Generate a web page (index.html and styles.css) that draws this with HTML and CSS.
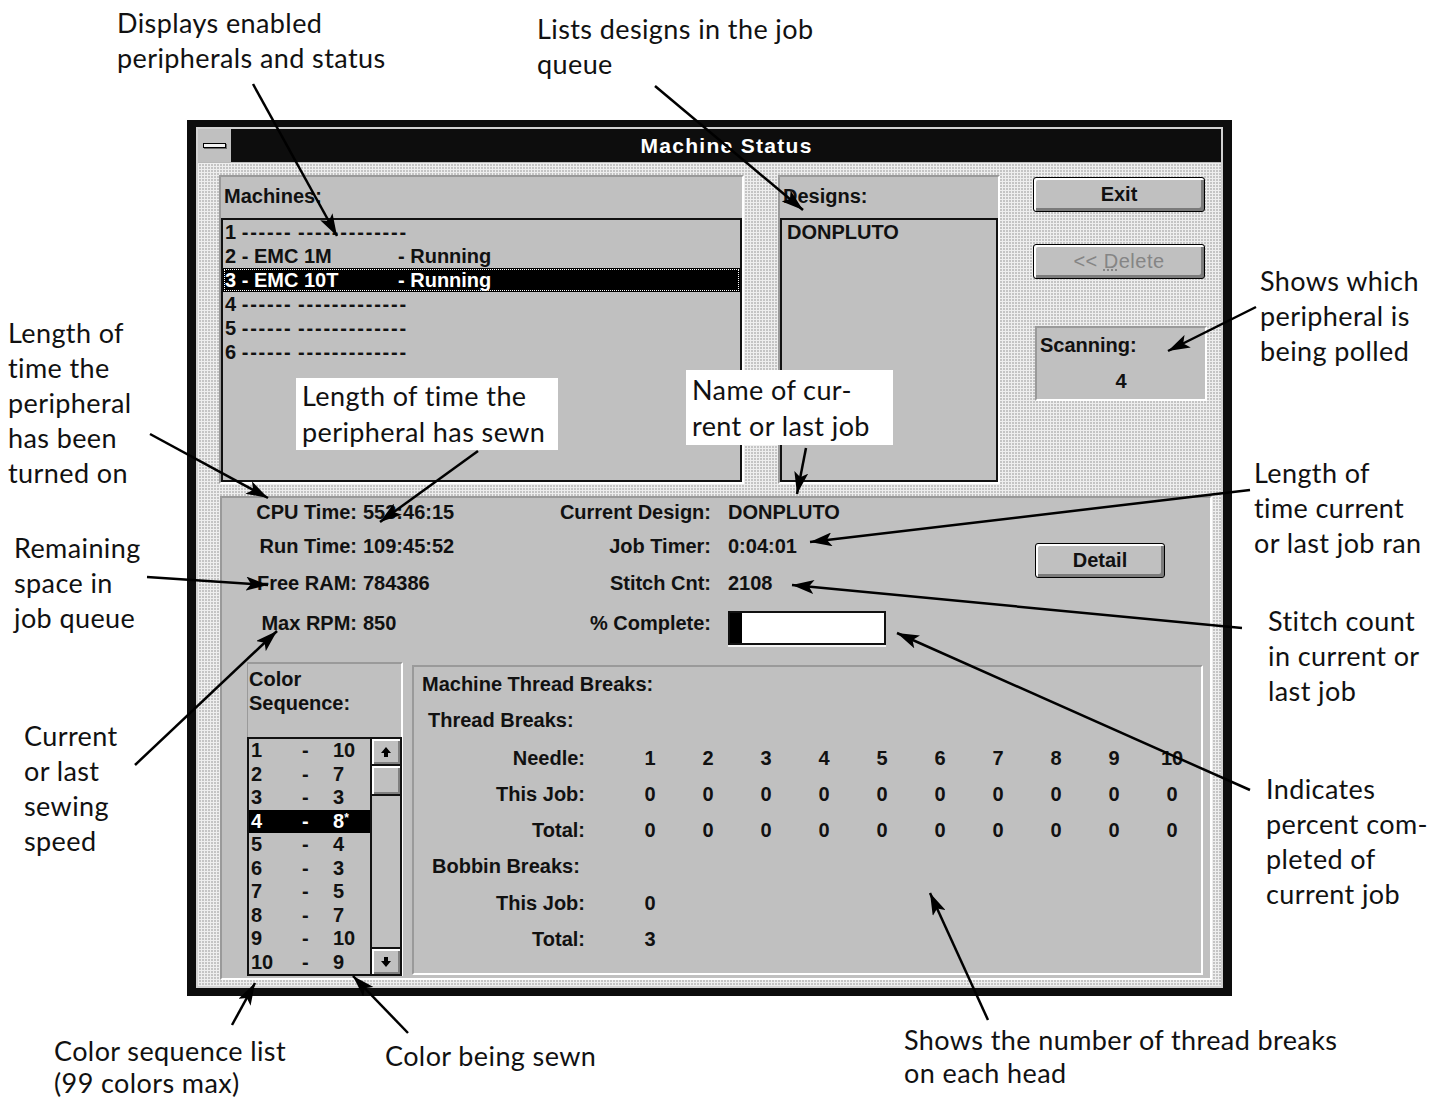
FILE: index.html
```html
<!DOCTYPE html>
<html lang="en">
<head>
  <meta charset="UTF-8" />
  <title>Machine Status</title>
  <link rel="stylesheet" href="styles.css">
</head>
<body>
<div class="page">

  <div class="window">
    <div class="frame">
      <div class="titlebar">
        <div class="sysmenu"><span class="sysbar"></span></div>
        <div class="title">Machine Status</div>
      </div>

      <div class="client">
        <div class="top">
          <div class="group machines">
            <div class="glabel">Machines:</div>
            <div class="listbox mlist">
              <div class="item">1 <span class="dash">------</span> <span class="dash">-------------</span></div>
              <div class="item"><span class="mname">2 - EMC 1M</span>- Running</div>
              <div class="item sel"><span class="mname">3 - EMC 10T</span>- Running</div>
              <div class="item">4 <span class="dash">------</span> <span class="dash">-------------</span></div>
              <div class="item">5 <span class="dash">------</span> <span class="dash">-------------</span></div>
              <div class="item">6 <span class="dash">------</span> <span class="dash">-------------</span></div>
            </div>
          </div>

          <div class="group designs">
            <div class="glabel">Designs:</div>
            <div class="listbox dlist">
              <div class="item">DONPLUTO</div>
            </div>
          </div>

          <div class="side">
            <div class="btn exit">Exit</div>
            <div class="btn delete">&lt;&lt; <u>D</u>elete</div>
            <div class="group scanning">
              <div class="slabel">Scanning:</div>
              <div class="svalue">4</div>
            </div>
          </div>
        </div>

        <div class="group bottom">
          <div class="info">
            <div class="lbl first">CPU Time:</div><div class="val v1">553:46:15</div>
            <div class="lbl">Current Design:</div><div class="val v2">DONPLUTO</div>

            <div class="lbl first">Run Time:</div><div class="val v1">109:45:52</div>
            <div class="lbl">Job Timer:</div><div class="val v2">0:04:01</div>

            <div class="lbl first">Free RAM:</div><div class="val v1">784386</div>
            <div class="lbl">Stitch Cnt:</div><div class="val v2">2108</div>

            <div class="lbl first">Max RPM:</div><div class="val v1">850</div>
            <div class="lbl">% Complete:</div>
            <div class="val v2"><div class="progress"><span class="fill"></span></div></div>

            <div class="btn detail">Detail</div>
          </div>

          <div class="lower">
            <div class="colorgroup">
              <div class="clabel">Color<br>Sequence:</div>
              <div class="listbox colorlist">
                <div class="crows">
                  <div class="crow"><span>1</span><span>-</span><span>10</span></div>
                  <div class="crow"><span>2</span><span>-</span><span>7</span></div>
                  <div class="crow"><span>3</span><span>-</span><span>3</span></div>
                  <div class="crow sel"><span>4</span><span>-</span><span>8<sup>*</sup></span></div>
                  <div class="crow"><span>5</span><span>-</span><span>4</span></div>
                  <div class="crow"><span>6</span><span>-</span><span>3</span></div>
                  <div class="crow"><span>7</span><span>-</span><span>5</span></div>
                  <div class="crow"><span>8</span><span>-</span><span>7</span></div>
                  <div class="crow"><span>9</span><span>-</span><span>10</span></div>
                  <div class="crow"><span>10</span><span>-</span><span>9</span></div>
                </div>
                <div class="scroll">
                  <div class="sbtn up">
                    <svg width="14" height="14" viewBox="0 0 14 14"><path d="M7 2 L12 8 L9 8 L9 12 L5 12 L5 8 L2 8 Z" fill="#000"/></svg>
                  </div>
                  <div class="thumb"></div>
                  <div class="track"></div>
                  <div class="sbtn down">
                    <svg width="14" height="14" viewBox="0 0 14 14"><path d="M7 12 L12 6 L9 6 L9 2 L5 2 L5 6 L2 6 Z" fill="#000"/></svg>
                  </div>
                </div>
              </div>
            </div>

            <div class="group threads">
              <div class="span t1">Machine Thread Breaks:</div>
              <div class="span t2">Thread Breaks:</div>

              <div class="tl">Needle:</div>
              <div class="n">1</div><div class="n">2</div><div class="n">3</div><div class="n">4</div><div class="n">5</div>
              <div class="n">6</div><div class="n">7</div><div class="n">8</div><div class="n">9</div><div class="n">10</div>

              <div class="tl">This Job:</div>
              <div class="n">0</div><div class="n">0</div><div class="n">0</div><div class="n">0</div><div class="n">0</div>
              <div class="n">0</div><div class="n">0</div><div class="n">0</div><div class="n">0</div><div class="n">0</div>

              <div class="tl">Total:</div>
              <div class="n">0</div><div class="n">0</div><div class="n">0</div><div class="n">0</div><div class="n">0</div>
              <div class="n">0</div><div class="n">0</div><div class="n">0</div><div class="n">0</div><div class="n">0</div>

              <div class="span t3">Bobbin Breaks:</div>

              <div class="tl">This Job:</div>
              <div class="n">0</div><div class="rest"></div>

              <div class="tl">Total:</div>
              <div class="n">3</div><div class="rest"></div>
            </div>
          </div>
        </div>
      </div>
    </div>
  </div>

  <!-- callouts -->
  <div class="note n1">Displays enabled<br>peripherals and status</div>
  <div class="note n2">Lists designs in the job<br>queue</div>
  <div class="note n3">Shows which<br>peripheral is<br>being polled</div>
  <div class="note n4">Length of<br>time the<br>peripheral<br>has been<br>turned on</div>
  <div class="note boxed n5">Length of time the<br>peripheral has sewn</div>
  <div class="note boxed n6">Name of cur-<br>rent or last job</div>
  <div class="note n7">Remaining<br>space in<br>job queue</div>
  <div class="note n8">Length of<br>time current<br>or last job ran</div>
  <div class="note n9">Stitch count<br>in current or<br>last job</div>
  <div class="note n10">Current<br>or last<br>sewing<br>speed</div>
  <div class="note n11">Indicates<br>percent com-<br>pleted of<br>current job</div>
  <div class="note n12">Color sequence list<br>(99 colors max)</div>
  <div class="note n13">Color being sewn</div>
  <div class="note n14">Shows the number of thread breaks<br>on each head</div>

  <svg class="arrows" width="1448" height="1100" viewBox="0 0 1448 1100">
    <defs>
      <marker id="head" markerUnits="userSpaceOnUse" markerWidth="24" markerHeight="14" refX="22" refY="7" orient="auto">
        <path d="M0 0 L22 7 L0 14 L5 7 Z" fill="#000"/>
      </marker>
    </defs>
    <g stroke="#000" stroke-width="2.5" marker-end="url(#head)">
      <line x1="253" y1="84" x2="337" y2="236"/>
      <line x1="655" y1="86" x2="803" y2="210"/>
      <line x1="1256" y1="307" x2="1168" y2="351"/>
      <line x1="150" y1="434" x2="268" y2="498"/>
      <line x1="478" y1="451" x2="380" y2="522"/>
      <line x1="806" y1="448" x2="797" y2="494"/>
      <line x1="147" y1="577" x2="268" y2="585"/>
      <line x1="1250" y1="490" x2="810" y2="542"/>
      <line x1="1242" y1="628" x2="792" y2="585"/>
      <line x1="135" y1="765" x2="277" y2="631"/>
      <line x1="1250" y1="790" x2="897" y2="633"/>
      <line x1="232" y1="1025" x2="255" y2="983"/>
      <line x1="408" y1="1033" x2="353" y2="976"/>
      <line x1="988" y1="1020" x2="930" y2="893"/>
    </g>
  </svg>
</div>
</body>
</html>
```

FILE: styles.css
```css
body {
  margin: 0;
  background: #fff;
  font-family: "Liberation Sans", Arial, sans-serif;
  color: #111;
}
.page { position: relative; width: 1448px; height: 1100px; overflow: hidden; }

/* dialog window */
.window {
  box-sizing: border-box;
  margin: 120px 0 0 187px;
  width: 1045px;
  height: 876px;
  border-style: solid;
  border-color: #0d0d0d;
  border-width: 7px 9px 8px 9px;
}
.frame { height: 100%; box-sizing: border-box; border: 2px solid #d2d2d2; display: flex; flex-direction: column; }
.titlebar { height: 33px; background: #0d0d0d; display: flex; border-bottom: 1px solid #b8b8b8; }
.sysmenu { width: 33px; background: #c0c0c0; border-right: 1px solid #0d0d0d; display: flex; align-items: center; justify-content: center; }
.sysbar { width: 21px; height: 3px; background: #f2f2f2; border: 1px solid #000; box-shadow: 1px 1px 0 #6a6a6a; }
.title { flex: 1; text-align: center; color: #fff; font-weight: bold; font-size: 21px; letter-spacing: 1.3px; line-height: 33px; }

.client {
  flex: 1;
  padding: 12px 0 0 21px;
  background-color: #c4c4c4;
  background-image: linear-gradient(90deg, #eeeeee 1px, transparent 1px), linear-gradient(#eeeeee 1px, transparent 1px);
  background-size: 3px 3px;
  font-size: 20px;
  font-weight: bold;
}

.group {
  box-sizing: border-box;
  background: #c0c0c0;
  border: 2px solid;
  border-color: #9a9a9a #fff #fff #9a9a9a;
}
.glabel { flex: 1; padding: 8px 0 0 3px; }
.listbox { box-sizing: border-box; border: 2px solid #111; background: #c0c0c0; }
.item { height: 24px; line-height: 24px; padding-left: 2px; white-space: pre; }
.item.sel { background: #000; color: #fff; outline: 1px dotted #fff; outline-offset: -2px; }
.dash { letter-spacing: 1.8px; }
.mname { display: inline-block; width: 173px; }

.top { display: flex; height: 309px; }
.machines { width: 525px; display: flex; flex-direction: column; }
.mlist { height: 264px; }
.designs { width: 222px; margin-left: 34px; display: flex; flex-direction: column; }
.dlist { height: 264px; padding-left: 3px; }

.side { width: 174px; margin-left: 33px; display: flex; flex-direction: column; }
.btn {
  box-sizing: border-box;
  height: 35px;
  background: #c0c0c0;
  border: 1px solid #000;
  border-radius: 3px;
  box-shadow: inset 2px 2px 0 #fff, inset -2px -2px 0 #7b7b7b, inset -3px -3px 0 #7b7b7b;
  text-align: center;
  line-height: 33px;
}
.exit { margin-top: 2px; width: 172px; }
.delete { margin-top: 32px; width: 172px; color: #858585; font-weight: normal; letter-spacing: 0.5px; }
.delete u { text-decoration-style: dotted; }
.scanning { margin: 47px 0 0 2px; width: 172px; height: 75px; }
.slabel { padding: 3px 0 0 3px; line-height: 28px; }
.svalue { text-align: center; line-height: 44px; }

/* lower status panel */
.bottom { margin: 12px 0 0 1px; width: 992px; height: 484px; }
.info {
  display: grid;
  grid-template-columns: 135px 186px 168px 324px 130px;
  grid-template-rows: 28px 40px 34px 46px;
  align-items: center;
}
.lbl { text-align: right; white-space: nowrap; }
.lbl.first { grid-column: 1; }
.v1 { padding-left: 6px; white-space: nowrap; }
.v2 { padding-left: 17px; }
.detail { grid-column: 5; grid-row: 2 / 4; align-self: center; margin-bottom: 6px; }
.progress { box-sizing: border-box; width: 158px; height: 34px; margin-top: 10px; border: 2px solid #111; background: #fff; box-shadow: 0 2px 0 #f4f4f4; }
.fill { display: block; width: 12px; height: 100%; background: #000; }

.lower { display: flex; align-items: flex-start; margin-top: 16px; padding-left: 25px; }
.colorgroup {
  box-sizing: border-box;
  width: 156px;
  height: 314px;
  background: #c0c0c0;
  border-top: 2px solid #9a9a9a;
  border-left: 1px solid #9a9a9a;
  border-right: 2px solid #fff;
  display: flex;
  flex-direction: column;
}
.clabel { flex: 1; padding: 3px 0 0 1px; line-height: 24px; }
.colorlist { height: 239px; width: 155px; margin-left: -1px; display: flex; }
.crows { flex: 1; }
.crow { display: grid; grid-template-columns: 51px 31px 1fr; height: 23.5px; line-height: 23.5px; padding-left: 2px; }
.crow.sel { background: #000; color: #fff; }
.crow sup { font-size: 12px; line-height: 0; vertical-align: 6px; }
.scroll { width: 28px; border-left: 2px solid #111; display: flex; flex-direction: column; background: #c0c0c0; }
.sbtn {
  box-sizing: border-box;
  height: 27px;
  display: flex;
  align-items: center;
  justify-content: center;
  box-shadow: inset 2px 2px 0 #fff, inset -2px -2px 0 #808080;
}
.up { border-bottom: 2px solid #111; }
.down { border-top: 2px solid #111; }
.thumb { box-sizing: border-box; height: 30px; border-bottom: 2px solid #111; box-shadow: inset 2px 2px 0 #fff, inset -2px -2px 0 #808080; }
.track { flex: 1; }

.threads {
  margin: 3px 0 0 9px;
  width: 791px;
  height: 310px;
  display: grid;
  grid-template-columns: 207px repeat(10, 58px);
  grid-template-rows: 34px 39px 36px 37px 34px 38px 37px 35px;
  align-items: center;
}
.span { grid-column: 1 / -1; }
.t1 { padding-left: 8px; }
.t2 { padding-left: 14px; }
.t3 { padding-left: 18px; }
.tl { text-align: right; padding-right: 36px; }
.n { text-align: center; }
.rest { grid-column: span 9; }

/* callouts */
.note {
  position: absolute;
  z-index: 2;
  font-family: Lato, "Open Sans", sans-serif;
  font-size: 27px;
  letter-spacing: 0.4px;
  line-height: 35px;
  color: #111;
  white-space: nowrap;
}
.boxed { background: #fff; box-sizing: border-box; padding: 0 6px; line-height: 36px; }
.n1 { left: 117px; top: 5px; }
.n2 { left: 537px; top: 11px; }
.n3 { left: 1260px; top: 263px; }
.n4 { left: 8px; top: 315px; }
.n5 { left: 296px; top: 378px; width: 262px; height: 72px; }
.n6 { left: 686px; top: 370px; width: 207px; height: 75px; padding-top: 2px; }
.n7 { left: 14px; top: 530px; }
.n8 { left: 1254px; top: 455px; }
.n9 { left: 1268px; top: 603px; }
.n10 { left: 24px; top: 718px; }
.n11 { left: 1266px; top: 771px; }
.n12 { left: 54px; top: 1035px; line-height: 32px; }
.n13 { left: 385px; top: 1038px; }
.n14 { left: 904px; top: 1023px; line-height: 33px; }

.arrows { position: absolute; left: 0; top: 0; z-index: 3; pointer-events: none; }
```
